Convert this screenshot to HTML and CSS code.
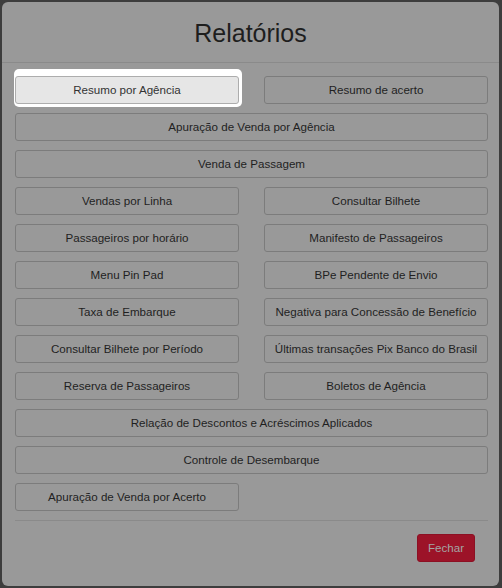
FILE: index.html
```html
<!DOCTYPE html>
<html lang="pt-BR">
<head>
  <meta charset="UTF-8" />
  <title>Relatórios</title>
  <link rel="stylesheet" href="styles.css">
</head>
<body>

  <div class="modal">
    <div class="modal-header">
      <h2>Relatórios</h2>
    </div>

    <div class="modal-body">
      <button class="report-btn active">Resumo por Agência</button>
      <button class="report-btn">Resumo de acerto</button>
      <button class="report-btn wide">Apuração de Venda por Agência</button>
      <button class="report-btn wide">Venda de Passagem</button>
      <button class="report-btn">Vendas por Linha</button>
      <button class="report-btn">Consultar Bilhete</button>
      <button class="report-btn">Passageiros por horário</button>
      <button class="report-btn">Manifesto de Passageiros</button>
      <button class="report-btn">Menu Pin Pad</button>
      <button class="report-btn">BPe Pendente de Envio</button>
      <button class="report-btn">Taxa de Embarque</button>
      <button class="report-btn">Negativa para Concessão de Benefício</button>
      <button class="report-btn">Consultar Bilhete por Período</button>
      <button class="report-btn">Últimas transações Pix Banco do Brasil</button>
      <button class="report-btn">Reserva de Passageiros</button>
      <button class="report-btn">Boletos de Agência</button>
      <button class="report-btn wide">Relação de Descontos e Acréscimos Aplicados</button>
      <button class="report-btn wide">Controle de Desembarque</button>
      <button class="report-btn">Apuração de Venda por Acerto</button>
    </div>

    <div class="modal-footer">
      <button class="close-btn">Fechar</button>
    </div>
  </div>

</body>
</html>
```

FILE: styles.css
```css
body {
  margin: 0;
  background-color: #3d3d3d;
  font-family: "Liberation Sans", Arial, sans-serif;
  width: 502px;
  height: 588px;
  overflow: hidden;
}

.modal {
  margin: 2px 0 0 2px;
  width: 497px;
  height: 584px;
  box-sizing: border-box;
  background-color: #999;
  border-radius: 6px;
  display: flex;
  flex-direction: column;
}

.modal-header {
  height: 60px;
  border-bottom: 1px solid #8a8a8a;
  display: flex;
  align-items: center;
  justify-content: center;
}

.modal-header h2 {
  margin: 2px 0 0 0;
  font-size: 25px;
  font-weight: normal;
  color: #1e1e1e;
}

.modal-body {
  padding: 13px 11px 0 13px;
  display: grid;
  grid-template-columns: 224px 224px;
  column-gap: 25px;
  row-gap: 9px;
  isolation: isolate;
}

.report-btn {
  position: relative;
  height: 28px;
  padding: 0 6px 2px 6px;
  background-color: #999;
  border: 1px solid #7c7c7c;
  border-radius: 3px;
  font-family: "Liberation Sans", Arial, sans-serif;
  font-size: 11.6px;
  color: #1f1f1f;
  white-space: nowrap;
  cursor: pointer;
}

.report-btn.wide {
  grid-column: 1 / 3;
}

.report-btn.active {
  background-color: #e6e6e6;
  border-color: #adadad;
  color: #333;
}

.report-btn.active::before {
  content: "";
  position: absolute;
  top: -8px;
  left: -2px;
  right: -4px;
  bottom: -4px;
  background-color: #fff;
  border-radius: 5px;
  z-index: -1;
}

.modal-footer {
  margin: 9px 11px 0 13px;
  border-top: 1px solid #8a8a8a;
  padding: 13px 13px 0 0;
  display: flex;
  justify-content: flex-end;
}

.close-btn {
  height: 28px;
  width: 58px;
  padding-bottom: 2px;
  background-color: #9c1328;
  border: 1px solid #8c1023;
  border-radius: 3px;
  font-family: "Liberation Sans", Arial, sans-serif;
  font-size: 11.6px;
  color: #a4a4a4;
  cursor: pointer;
}
```
